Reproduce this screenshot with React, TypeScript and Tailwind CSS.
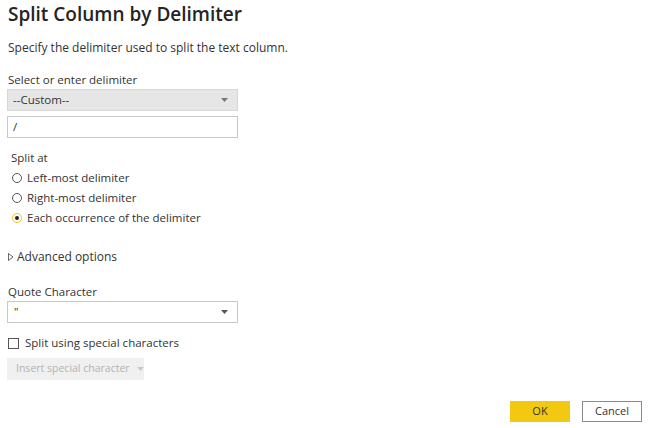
import React from 'react';

function Caret({ className = '' }: { className?: string }) {
  return (
    <svg width="7" height="4" viewBox="0 0 7 4" className={className}>
      <path d="M0 0 L7 0 L3.5 4 Z" fill="currentColor" />
    </svg>
  );
}

function Radio({ checked }: { checked?: boolean }) {
  return (
    <span
      className={
        'w-[10px] h-[10px] rounded-full border flex items-center justify-center shrink-0 ' +
        (checked ? 'border-[#f2c811] bg-white' : 'border-[#555] bg-white')
      }
    >
      {checked && <span className="w-[4px] h-[4px] rounded-full bg-[#222]" />}
    </span>
  );
}

export default function App() {
  return (
    <div
      className="w-[650px] h-[428px] bg-white text-[#252423] flex flex-col px-[7px] relative"
      style={{ fontFamily: '"Open Sans", "Noto Sans", sans-serif' }}
    >
      <h1 className="text-[19px] leading-[28px] font-semibold text-[#252423] pl-[1px]">
        Split Column by Delimiter
      </h1>
      <p className="text-[12px] leading-[16px] mt-[12px] pl-[1px] text-[#333]">
        Specify the delimiter used to split the text column.
      </p>

      <label className="text-[11.5px] leading-[16px] mt-[16px] pl-[1px] text-[#333]">
        Select or enter delimiter
      </label>
      <div className="mt-[1px] w-[231px] h-[22px] bg-[#e6e6e6] border border-[#d6d6d6] flex items-center justify-between px-[5px] text-[11.5px] text-[#333]">
        <span>--Custom--</span>
        <Caret className="text-[#777] mr-[4px]" />
      </div>
      <div className="mt-[5px] w-[231px] h-[22px] bg-white border border-[#c8c8c8] flex items-center px-[5px] text-[11.5px] text-[#333]">
        /
      </div>

      <div className="mt-[12px] text-[11.5px] leading-[16px] pl-[4px] text-[#333]">Split at</div>
      <div className="flex flex-col gap-[4px] mt-[4px] pl-[5px] text-[11.5px] text-[#333]">
        <div className="flex items-center gap-[5px] h-[16px]">
          <Radio />
          <span>Left-most delimiter</span>
        </div>
        <div className="flex items-center gap-[5px] h-[16px]">
          <Radio />
          <span>Right-most delimiter</span>
        </div>
        <div className="flex items-center gap-[5px] h-[16px]">
          <Radio checked />
          <span>Each occurrence of the delimiter</span>
        </div>
      </div>

      <div className="mt-[23px] flex items-center gap-[3px] pl-[1px] text-[12px] h-[16px] text-[#333]">
        <svg width="6" height="8" viewBox="0 0 6 8">
          <path d="M0.5 0.5 L5 4 L0.5 7.5 Z" fill="none" stroke="#555" strokeWidth="0.9" />
        </svg>
        <span>Advanced options</span>
      </div>

      <label className="text-[11.5px] leading-[16px] mt-[19px] pl-[1px] text-[#333]">
        Quote Character
      </label>
      <div className="mt-[1px] w-[231px] h-[22px] bg-white border border-[#c8c8c8] flex items-center justify-between px-[6px] text-[11px] text-[#333]">
        <span>"</span>
        <Caret className="text-[#555] mr-[3px]" />
      </div>

      <label className="mt-[12px] flex items-center gap-[6px] pl-[1px] h-[16px] text-[11.5px] text-[#333]">
        <span className="w-[11px] h-[11px] border border-[#555] bg-white" />
        <span>Split using special characters</span>
      </label>
      <div className="mt-[7px] w-[137px] h-[22px] bg-[#f0f0f0] flex items-center pl-[9px] gap-[7px] text-[10.5px] text-[#b3b3b3] whitespace-nowrap">
        <span>Insert special character</span>
        <Caret className="text-[#c8c8c8] shrink-0" />
      </div>

      <div className="mt-auto mb-[6px] flex justify-end gap-[12px] pr-[1px]">
        <button className="w-[60px] h-[21px] bg-[#f2c811] text-[11px] text-[#333]">OK</button>
        <button className="w-[60px] h-[21px] bg-white border border-[#8a8a8a] text-[11px] text-[#333]">
          Cancel
        </button>
      </div>
    </div>
  );
}
